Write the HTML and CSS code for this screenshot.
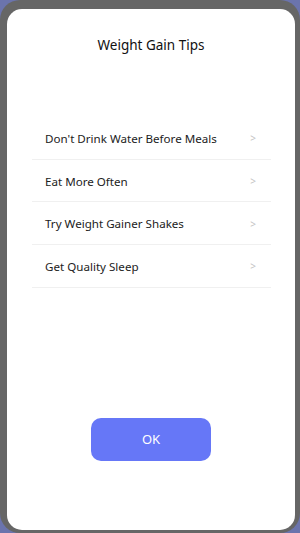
FILE: index.html
```html
<!DOCTYPE html>
<html lang="en">
<head>
    <meta charset="UTF-8">
    <meta name="viewport" content="width=device-width, initial-scale=1.0">
    <title>Weight Gain Tips</title>
    <link rel="stylesheet" href="styles.css">
</head>
<body>
    <div class="frame">
        <div class="card">
            <h1 class="title">Weight Gain Tips</h1>
            <ul class="tips">
                <li class="tip"><span>Don't Drink Water Before Meals</span><span class="chevron">&gt;</span></li>
                <li class="tip"><span>Eat More Often</span><span class="chevron">&gt;</span></li>
                <li class="tip"><span>Try Weight Gainer Shakes</span><span class="chevron">&gt;</span></li>
                <li class="tip"><span>Get Quality Sleep</span><span class="chevron">&gt;</span></li>
            </ul>
            <button class="ok-button">OK</button>
        </div>
    </div>
</body>
</html>
```

FILE: styles.css
```css
body {
    margin: 0;
    background: #6b74ad;
    font-family: 'Noto Sans', 'Open Sans', sans-serif;
}

.frame {
    height: 533px;
    box-sizing: border-box;
    background: #666;
    border-radius: 20px;
    padding: 9px 5px 3px 7px;
}

.card {
    height: 100%;
    background: #fff;
    border-radius: 15px;
    display: flex;
    flex-direction: column;
    align-items: center;
}

.title {
    margin: 26px 0 0;
    font-size: 13.5px;
    line-height: 20px;
    font-weight: normal;
    color: #111;
}

.tips {
    list-style: none;
    margin: 62px 24px 0 25px;
    padding: 0;
    align-self: stretch;
}

.tip {
    height: 42.7px;
    box-sizing: border-box;
    display: flex;
    align-items: center;
    justify-content: space-between;
    padding: 1px 15px 0 13px;
    border-bottom: 1px solid #f0f0f0;
    font-size: 11.6px;
    color: #222;
}

.chevron {
    font-size: 10px;
    color: #c4c4c4;
}

.ok-button {
    margin-top: 130px;
    width: 120px;
    height: 43px;
    border: none;
    border-radius: 10px;
    background: #6677f7;
    color: #fff;
    font-family: inherit;
    font-size: 13px;
}
```
